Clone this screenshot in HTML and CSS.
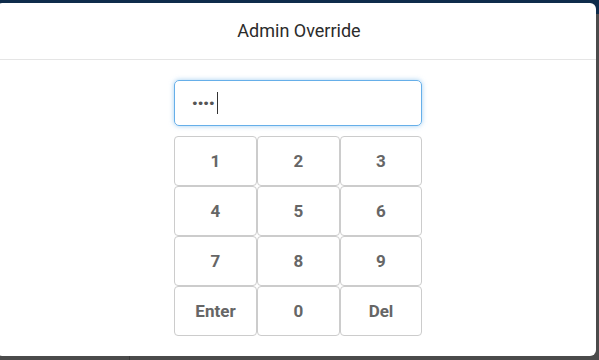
FILE: index.html
```html
<!DOCTYPE html>
<html lang="en">

<head>
    <meta charset="UTF-8">
    <meta name="viewport" content="width=device-width, initial-scale=1.0">
    <title>Admin Override</title>
    <link rel="stylesheet" href="styles.css">
</head>

<body>
    <div class="page">
        <div class="topbar"></div>
        <div class="content">
            <div class="sidebar"></div>
        </div>
    </div>

    <div class="modal">
        <div class="modal-header">
            <h4>Admin Override</h4>
        </div>
        <div class="modal-body">
            <div class="pin-input">
                <span class="dots">&bull;&bull;&bull;&bull;</span><span class="caret"></span>
            </div>
            <div class="keypad">
                <button>1</button>
                <button>2</button>
                <button>3</button>
                <button>4</button>
                <button>5</button>
                <button>6</button>
                <button>7</button>
                <button>8</button>
                <button>9</button>
                <button>Enter</button>
                <button>0</button>
                <button>Del</button>
            </div>
        </div>
    </div>
</body>

</html>
```

FILE: styles.css
```css
* {
    box-sizing: border-box;
}

body {
    margin: 0;
    height: 360px;
    overflow: hidden;
    font-family: Roboto, "Liberation Sans", sans-serif;
    background: #4b4b4b;
}

.page {
    display: flex;
    flex-direction: column;
    height: 100%;
}

.topbar {
    height: 14px;
    background: #0e2c4b;
}

.content {
    flex: 1;
    display: flex;
}

.sidebar {
    width: 130px;
    border-right: 1px solid #3a3a3a;
}

.modal {
    position: fixed;
    top: 3px;
    left: -4px;
    width: 600px;
    height: 353px;
    background: #fff;
    border-radius: 6px;
}

.modal-header {
    height: 57px;
    border-bottom: 1px solid #e5e5e5;
    display: flex;
    align-items: center;
    justify-content: center;
}

.modal-header h4 {
    margin: 0 0 1px 6px;
    font-size: 18px;
    font-weight: 400;
    color: #2b2b2b;
}

.modal-body {
    width: 248px;
    margin: 20px auto 0;
    padding-left: 4px;
    box-sizing: content-box;
}

.pin-input {
    height: 46px;
    border: 1px solid #66afe9;
    border-radius: 5px;
    box-shadow: 0 0 5px rgba(102, 175, 233, 0.6);
    display: flex;
    align-items: center;
    padding-left: 16px;
    color: #555;
}

.dots {
    font-size: 13px;
    letter-spacing: -2px;
    font-family: "DejaVu Sans", sans-serif;
}

.caret {
    width: 1px;
    height: 22px;
    margin-left: 3px;
    background: #333;
}

.keypad {
    margin-top: 10px;
    display: grid;
    grid-template-columns: 83px 83px 82px;
}

.keypad button {
    height: 50px;
    background: #fff;
    border: 1px solid #ccc;
    border-radius: 4px;
    font-family: Roboto, "Liberation Sans", sans-serif;
    font-size: 17px;
    font-weight: 700;
    color: #666;
    padding: 0;
}
```
